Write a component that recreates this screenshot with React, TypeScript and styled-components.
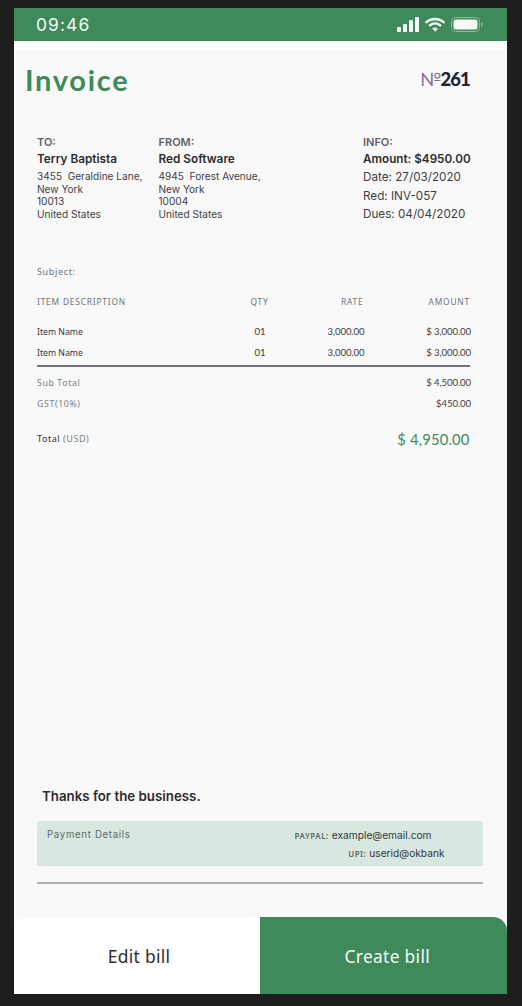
import React from 'react';
import styled, { createGlobalStyle } from 'styled-components';

const GlobalStyle = createGlobalStyle`
  body {
    margin: 0;
    padding: 0;
    background-color: #1e1e1e;
    font-family: Inter, "Liberation Sans", sans-serif;
  }
`;

const green = '#3e8a5a';

const Phone = styled.div`
  width: 492.5px;
  height: 986px;
  margin: 8px 0 0 14px;
  display: flex;
  flex-direction: column;
  background-color: #f9f9f9;
  overflow: hidden;
`;

const StatusBar = styled.div`
  height: 33px;
  flex: none;
  display: flex;
  justify-content: space-between;
  align-items: center;
  padding: 0 24px 0 22px;
  background-color: ${green};
  border-bottom: 8px solid #ffffff;
`;

const Clock = styled.span`
  color: #f4f8f5;
  font-size: 17.4px;
  letter-spacing: 1.1px;
`;

const StatusIcons = styled.div`
  display: flex;
  align-items: center;
  gap: 6px;
`;

const Sheet = styled.main`
  flex: 1;
  display: flex;
  flex-direction: column;
  padding: 0 23.5px 0 23px;
`;

const Header = styled.header`
  display: flex;
  justify-content: space-between;
  align-items: center;
  margin: 12px 13px 0 -12px;
  height: 36px;
`;

const Logo = styled.h1`
  margin: 0;
  color: ${green};
  font-family: Lato, sans-serif;
  font-size: 29px;
  font-weight: 700;
  letter-spacing: 1.7px;
`;

const InvoiceNo = styled.div`
  display: flex;
  align-items: baseline;
  font-family: Lato, sans-serif;
  font-size: 18.4px;
  font-weight: 900;
  letter-spacing: -0.8px;
  color: #23233a;
`;

const NoMark = styled.span`
  color: #85729a;
  font-weight: 400;
`;

const Parties = styled.section`
  display: grid;
  grid-template-columns: 121.5px 204.5px 1fr;
  margin-top: 38px;
`;

const PartyLabel = styled.div`
  color: #5e6368;
  font-size: 11px;
  font-weight: 600;
  line-height: 14px;
`;

const PartyName = styled.div`
  color: #2c2c2e;
  font-size: 11.8px;
  font-weight: 600;
  line-height: 15px;
  margin-top: 3px;
`;

const Address = styled.div`
  color: #3f3f42;
  font-size: 10.1px;
  line-height: 12.6px;
  margin-top: 3px;
  white-space: pre;
`;

const InfoList = styled.div`
  margin-top: 1px;
`;

const InfoLine = styled.div<{ $strong?: boolean }>`
  color: ${p => (p.$strong ? '#2c2c2e' : '#3f3f42')};
  font-size: 11.7px;
  font-weight: ${p => (p.$strong ? 600 : 400)};
  line-height: 18.4px;
`;

const Subject = styled.div`
  margin-top: 42px;
  color: #6f7377;
  font-family: "Noto Sans", sans-serif;
  font-size: 9px;
  letter-spacing: 0.65px;
  line-height: 12px;
`;

const Table = styled.section`
  margin-right: 13px;
`;

const TableRow = styled.div<{ $top: number }>`
  display: grid;
  grid-template-columns: 199.5px 46px 81px 1fr;
  align-items: center;
  height: 12px;
  margin-top: ${p => p.$top}px;
`;

const HeadCell = styled.div<{ $align?: string }>`
  color: #6f7377;
  font-family: "Noto Sans", sans-serif;
  font-size: 8.4px;
  letter-spacing: 0.8px;
  text-align: ${p => p.$align || 'left'};
`;

const NameCell = styled.div`
  color: #34343a;
  font-family: "Noto Sans", sans-serif;
  font-size: 8.7px;
`;

const NumCell = styled.div<{ $align?: string }>`
  color: #3e3e44;
  font-family: Lato, sans-serif;
  font-size: 9.6px;
  letter-spacing: -0.1px;
  margin-right: -1px;
  text-align: ${p => p.$align || 'right'};
`;

const Rule = styled.hr`
  height: 2px;
  margin: 6px 0 0;
  border: 0;
  background-color: #72727f;
`;

const SumRow = styled.div<{ $top: number }>`
  display: flex;
  justify-content: space-between;
  align-items: center;
  height: 12px;
  margin-top: ${p => p.$top}px;
`;

const SumLabel = styled.div`
  color: #7d8084;
  font-family: "Noto Sans", sans-serif;
  font-size: 8.8px;
  letter-spacing: 0.6px;
`;

const TotalRow = styled.div`
  display: flex;
  justify-content: space-between;
  align-items: center;
  height: 20px;
  margin-top: 19px;
`;

const TotalLabel = styled.div`
  color: #34343a;
  font-family: "Noto Sans", sans-serif;
  font-size: 9px;
  letter-spacing: 0.55px;
`;

const Currency = styled.span`
  color: #7d8084;
`;

const TotalValue = styled.div`
  color: ${green};
  font-family: Lato, sans-serif;
  font-size: 14.8px;
  letter-spacing: 0.15px;
  margin-right: 0.5px;
`;

const Thanks = styled.div`
  margin: auto 0 0 5px;
  color: #2c2c2e;
  font-size: 13.3px;
  font-weight: 600;
  line-height: 16px;
`;

const PaymentBox = styled.section`
  height: 45px;
  margin-top: 17px;
  display: flex;
  justify-content: space-between;
  padding: 8px 38.5px 0 10px;
  box-sizing: border-box;
  background-color: #d8e8e0;
`;

const PaymentTitle = styled.div`
  color: #62696a;
  font-size: 9.7px;
  letter-spacing: 0.65px;
  line-height: 12px;
`;

const PaymentLines = styled.div`
  display: flex;
  flex-direction: column;
  align-items: flex-end;
  gap: 5px;
`;

const PaymentLine = styled.div<{ $shift: number }>`
  color: #34343a;
  font-size: 10.2px;
  line-height: 12px;
  margin-right: ${p => p.$shift}px;
`;

const PaymentKey = styled.span`
  color: #5f6366;
  font-family: "Noto Sans", sans-serif;
  font-size: 8px;
  font-weight: 600;
  letter-spacing: 0.5px;
  text-transform: uppercase;
  margin-right: 3px;
`;

const BottomRule = styled.hr`
  height: 2px;
  margin: 16px 0 33px;
  border: 0;
  background-color: #adadb3;
`;

const Actions = styled.div`
  height: 77px;
  flex: none;
  display: grid;
  grid-template-columns: 246px 1fr;
`;

const ActionButton = styled.button<{ $primary?: boolean }>`
  border: none;
  padding: 0 0 0 ${p => (p.$primary ? 8 : 4)}px;
  font-family: "Noto Sans", sans-serif;
  font-size: 17.4px;
  letter-spacing: 0.3px;
  cursor: pointer;
  color: ${p => (p.$primary ? '#f4f8f5' : '#2c2c2e')};
  background-color: ${p => (p.$primary ? green : '#ffffff')};
  border-radius: ${p => (p.$primary ? '0 14px 0 0' : '14px 0 0 0')};
`;

const SignalIcon = () => (
  <svg width="22" height="15" viewBox="0 0 22 15" fill="#f8faf8">
    <rect x="0" y="10" width="4" height="5" rx="1" />
    <rect x="6" y="7" width="4" height="8" rx="1" />
    <rect x="12" y="3" width="4" height="12" rx="1" />
    <rect x="18" y="0" width="4" height="15" rx="1" />
  </svg>
);

const WifiIcon = () => (
  <svg width="20" height="15" viewBox="0 0 20 15" fill="none" stroke="#f8faf8" strokeWidth="2.3" strokeLinecap="round">
    <path d="M1.4 5.2 C6 .9 14 .9 18.6 5.2" />
    <path d="M4.8 8.4 C7.8 5.8 12.2 5.8 15.2 8.4" />
    <path d="M10 14 L7.8 11.7 C9 10.7 11 10.7 12.2 11.7 Z" fill="#f8faf8" strokeWidth="1" />
  </svg>
);

const BatteryIcon = () => (
  <svg width="32" height="15" viewBox="0 0 32 15">
    <rect x="0.5" y="0.5" width="28" height="14" rx="4" fill="none" stroke="#8dbb9d" />
    <rect x="2.5" y="2.5" width="24" height="10" rx="2.5" fill="#f8faf8" />
    <rect x="30" y="5.5" width="1.5" height="4" rx="0.7" fill="#8dbb9d" />
  </svg>
);

const items = [
  { name: 'Item Name', qty: '01', rate: '3,000.00', amount: '$ 3,000.00' },
  { name: 'Item Name', qty: '01', rate: '3,000.00', amount: '$ 3,000.00' },
];

const App: React.FC = () => {
  return (
    <>
      <GlobalStyle />
      <Phone>
        <StatusBar>
          <Clock>09:46</Clock>
          <StatusIcons>
            <SignalIcon />
            <WifiIcon />
            <BatteryIcon />
          </StatusIcons>
        </StatusBar>
        <Sheet>
          <Header>
            <Logo>Invoice</Logo>
            <InvoiceNo>
              <NoMark>№</NoMark>261
            </InvoiceNo>
          </Header>
          <Parties>
            <div>
              <PartyLabel>TO:</PartyLabel>
              <PartyName>Terry Baptista</PartyName>
              <Address>{'3455  Geraldine Lane,\nNew York\n10013\nUnited States'}</Address>
            </div>
            <div>
              <PartyLabel>FROM:</PartyLabel>
              <PartyName>Red Software</PartyName>
              <Address>{'4945  Forest Avenue,\nNew York\n10004\nUnited States'}</Address>
            </div>
            <div>
              <PartyLabel>INFO:</PartyLabel>
              <InfoList>
                <InfoLine $strong>Amount: $4950.00</InfoLine>
                <InfoLine>Date: 27/03/2020</InfoLine>
                <InfoLine>Red: INV-057</InfoLine>
                <InfoLine>Dues: 04/04/2020</InfoLine>
              </InfoList>
            </div>
          </Parties>
          <Subject>Subject:</Subject>
          <Table>
            <TableRow $top={18}>
              <HeadCell>ITEM DESCRIPTION</HeadCell>
              <HeadCell $align="center">QTY</HeadCell>
              <HeadCell $align="right">RATE</HeadCell>
              <HeadCell $align="right">AMOUNT</HeadCell>
            </TableRow>
            {items.map((item, i) => (
              <TableRow key={i} $top={i === 0 ? 18 : 9}>
                <NameCell>{item.name}</NameCell>
                <NumCell $align="center">{item.qty}</NumCell>
                <NumCell>{item.rate}</NumCell>
                <NumCell>{item.amount}</NumCell>
              </TableRow>
            ))}
            <Rule />
            <SumRow $top={10}>
              <SumLabel>Sub Total</SumLabel>
              <NumCell>$ 4,500.00</NumCell>
            </SumRow>
            <SumRow $top={9}>
              <SumLabel>GST(10%)</SumLabel>
              <NumCell>$450.00</NumCell>
            </SumRow>
            <TotalRow>
              <TotalLabel>
                Total <Currency>(USD)</Currency>
              </TotalLabel>
              <TotalValue>$ 4,950.00</TotalValue>
            </TotalRow>
          </Table>
          <Thanks>Thanks for the business.</Thanks>
          <PaymentBox>
            <PaymentTitle>Payment Details</PaymentTitle>
            <PaymentLines>
              <PaymentLine $shift={13}>
                <PaymentKey>Paypal:</PaymentKey>example@email.com
              </PaymentLine>
              <PaymentLine $shift={0}>
                <PaymentKey>UPI:</PaymentKey>userid@okbank
              </PaymentLine>
            </PaymentLines>
          </PaymentBox>
          <BottomRule />
        </Sheet>
        <Actions>
          <ActionButton>Edit bill</ActionButton>
          <ActionButton $primary>Create bill</ActionButton>
        </Actions>
      </Phone>
    </>
  );
};

export default App;
